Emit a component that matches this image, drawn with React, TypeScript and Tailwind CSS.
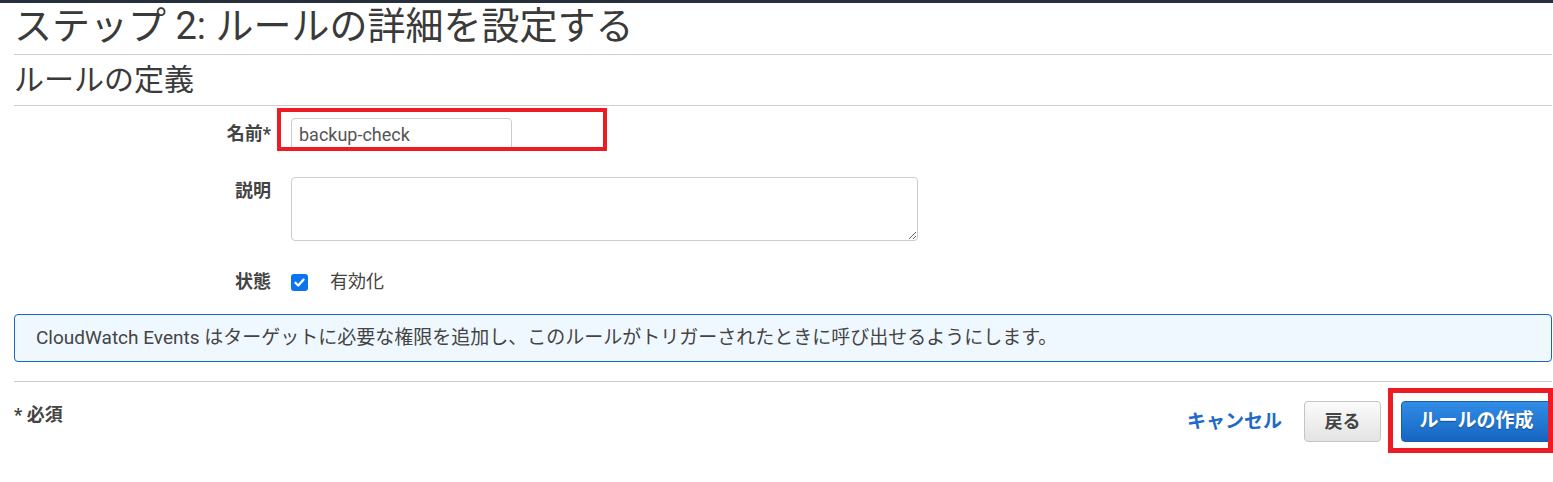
import React from "react";

const CheckBox = () => {
  return (
    <div className="w-[17px] h-[17px] rounded-[3px] bg-[#0b74ee] flex items-center justify-center">
      <svg width="13" height="13" viewBox="0 0 13 13">
        <polyline points="2.5,6.8 5.3,9.5 10.6,3.6" fill="none" stroke="#fff" strokeWidth="2.3" strokeLinecap="round" strokeLinejoin="round" />
      </svg>
    </div>
  );
};

const App = () => {
  return (
    <div className="relative w-[1553px] h-[482px] overflow-hidden bg-white font-['Roboto','Noto_Sans_CJK_JP',sans-serif] text-[#444]">
      <div className="h-[3px] bg-[#262f3c]" />
      <div className="pl-[14px] pr-[1px]">
        <h1 className="text-[38px] leading-[47px] pb-[4px] text-[#3a3a3a] font-normal border-b border-[#cccccc]">
          ステップ 2: ルールの詳細を設定する
        </h1>
        <h2 className="text-[30px] leading-[50px] text-[#3a3a3a] font-normal border-b border-[#cccccc]">
          ルールの定義
        </h2>

        <div className="flex items-center mt-[12px]">
          <div className="w-[257px] text-right text-[18px] font-bold leading-[24px] text-[#444]">名前*</div>
          <input
            className="ml-[20px] w-[221px] h-[32px] border border-[#cccccc] rounded-[4px] px-[7px] text-[18px] text-[#555] outline-none"
            defaultValue="backup-check"
          />
        </div>

        <div className="flex items-start mt-[27px]">
          <div className="w-[257px] pt-[2px] text-right text-[18px] font-bold leading-[24px] text-[#444]">説明</div>
          <textarea className="ml-[20px] w-[627px] h-[64px] border border-[#cccccc] rounded-[4px] outline-none" />
        </div>

        <div className="flex items-center mt-[32px] h-[18px]">
          <div className="w-[257px] text-right text-[18px] font-bold leading-[24px] text-[#444]">状態</div>
          <div className="ml-[20px]">
            <CheckBox />
          </div>
          <div className="ml-[22px] text-[18px] leading-[24px] text-[#444]">有効化</div>
        </div>

        <div className="mt-[23px] h-[48px] flex items-center px-[21px] border border-[#1d63b8] rounded-[4px] bg-[#f0f8ff] text-[19px] text-[#444]">
          CloudWatch Events はターゲットに必要な権限を追加し、このルールがトリガーされたときに呼び出せるようにします。
        </div>

        <div className="mt-[19px] border-t border-[#cccccc]" />

        <div className="flex justify-between items-start mt-[19px]">
          <div className="pt-[2px] text-[18px] font-bold leading-[24px] text-[#444]">* 必須</div>
          <div className="flex items-center">
            <button className="text-[19px] font-bold text-[#1d6bc6] leading-[24px] px-[0px]">キャンセル</button>
            <button className="ml-[22px] w-[77px] h-[41px] rounded-[4px] border border-[#c4c4c4] bg-gradient-to-b from-[#fbfbfb] to-[#e3e3e3] text-[18px] font-bold text-[#444]">
              戻る
            </button>
            <button className="ml-[20px] w-[151px] h-[41px] rounded-[4px] border border-[#1a5db0] bg-gradient-to-b from-[#318de5] to-[#1565c2] text-[19px] font-bold text-white [text-shadow:0_1px_1px_rgba(0,0,0,0.35)]">
              ルールの作成
            </button>
          </div>
        </div>
      </div>

      <div className="absolute left-[277px] top-[108px] w-[330px] h-[43px] border-4 border-[#ed1c24]" />
      <div className="absolute left-[1388px] top-[388px] w-[165px] h-[65px] border-[5px] border-[#ed1c24]" />
    </div>
  );
};

export default App;
